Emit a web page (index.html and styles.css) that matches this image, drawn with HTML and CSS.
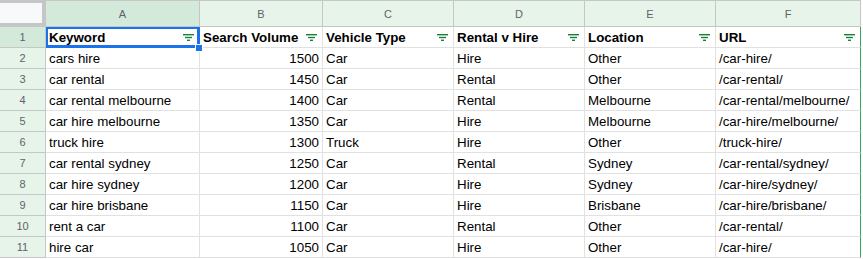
FILE: index.html
```html
<!DOCTYPE html>
<html lang="en">
<head>
<meta charset="UTF-8">
<title>Keywords</title>
<link rel="stylesheet" href="styles.css">
</head>
<body>
<div class="sheet">
  <!-- column letters -->
  <div class="corner"></div>
  <div class="col-head active">A</div>
  <div class="col-head">B</div>
  <div class="col-head">C</div>
  <div class="col-head">D</div>
  <div class="col-head">E</div>
  <div class="col-head last">F</div>

  <!-- header row -->
  <div class="row-head active">1</div>
  <div class="cell th selected">Keyword<svg class="filter" width="11" height="7" viewBox="0 0 11 7"><rect x="0" y="0" width="11" height="1.4"/><rect x="2" y="2.8" width="7" height="1.4"/><rect x="4" y="5.6" width="3" height="1.4"/></svg><span class="handle"></span></div>
  <div class="cell th">Search Volume<svg class="filter" width="11" height="7" viewBox="0 0 11 7"><rect x="0" y="0" width="11" height="1.4"/><rect x="2" y="2.8" width="7" height="1.4"/><rect x="4" y="5.6" width="3" height="1.4"/></svg></div>
  <div class="cell th">Vehicle Type<svg class="filter" width="11" height="7" viewBox="0 0 11 7"><rect x="0" y="0" width="11" height="1.4"/><rect x="2" y="2.8" width="7" height="1.4"/><rect x="4" y="5.6" width="3" height="1.4"/></svg></div>
  <div class="cell th">Rental v Hire<svg class="filter" width="11" height="7" viewBox="0 0 11 7"><rect x="0" y="0" width="11" height="1.4"/><rect x="2" y="2.8" width="7" height="1.4"/><rect x="4" y="5.6" width="3" height="1.4"/></svg></div>
  <div class="cell th">Location<svg class="filter" width="11" height="7" viewBox="0 0 11 7"><rect x="0" y="0" width="11" height="1.4"/><rect x="2" y="2.8" width="7" height="1.4"/><rect x="4" y="5.6" width="3" height="1.4"/></svg></div>
  <div class="cell th edge">URL<svg class="filter" width="11" height="7" viewBox="0 0 11 7"><rect x="0" y="0" width="11" height="1.4"/><rect x="2" y="2.8" width="7" height="1.4"/><rect x="4" y="5.6" width="3" height="1.4"/></svg></div>

  <div class="row-head">2</div>
  <div class="cell">cars hire</div><div class="cell num">1500</div><div class="cell">Car</div><div class="cell">Hire</div><div class="cell">Other</div><div class="cell edge">/car-hire/</div>

  <div class="row-head">3</div>
  <div class="cell">car rental</div><div class="cell num">1450</div><div class="cell">Car</div><div class="cell">Rental</div><div class="cell">Other</div><div class="cell edge">/car-rental/</div>

  <div class="row-head">4</div>
  <div class="cell">car rental melbourne</div><div class="cell num">1400</div><div class="cell">Car</div><div class="cell">Rental</div><div class="cell">Melbourne</div><div class="cell edge">/car-rental/melbourne/</div>

  <div class="row-head">5</div>
  <div class="cell">car hire melbourne</div><div class="cell num">1350</div><div class="cell">Car</div><div class="cell">Hire</div><div class="cell">Melbourne</div><div class="cell edge">/car-hire/melbourne/</div>

  <div class="row-head">6</div>
  <div class="cell">truck hire</div><div class="cell num">1300</div><div class="cell">Truck</div><div class="cell">Hire</div><div class="cell">Other</div><div class="cell edge">/truck-hire/</div>

  <div class="row-head">7</div>
  <div class="cell">car rental sydney</div><div class="cell num">1250</div><div class="cell">Car</div><div class="cell">Rental</div><div class="cell">Sydney</div><div class="cell edge">/car-rental/sydney/</div>

  <div class="row-head">8</div>
  <div class="cell">car hire sydney</div><div class="cell num">1200</div><div class="cell">Car</div><div class="cell">Hire</div><div class="cell">Sydney</div><div class="cell edge">/car-hire/sydney/</div>

  <div class="row-head">9</div>
  <div class="cell">car hire brisbane</div><div class="cell num">1150</div><div class="cell">Car</div><div class="cell">Hire</div><div class="cell">Brisbane</div><div class="cell edge">/car-hire/brisbane/</div>

  <div class="row-head">10</div>
  <div class="cell">rent a car</div><div class="cell num">1100</div><div class="cell">Car</div><div class="cell">Rental</div><div class="cell">Other</div><div class="cell edge">/car-rental/</div>

  <div class="row-head">11</div>
  <div class="cell">hire car</div><div class="cell num">1050</div><div class="cell">Car</div><div class="cell">Hire</div><div class="cell">Other</div><div class="cell edge">/car-hire/</div>
</div>
</body>
</html>
```

FILE: styles.css
```css
body {
  margin: 0;
  background: #fff;
  font-family: "Liberation Sans", Arial, sans-serif;
  overflow: hidden;
}

.sheet {
  display: grid;
  grid-template-columns: 46px 154px 123px 131px 131px 131px 145px;
  grid-template-rows: 27px repeat(11, 21px);
}

.sheet > div {
  box-sizing: border-box;
}

/* top-left box */
.corner {
  background: #f8f9fa;
  border-top: 3px solid #c4c7c5;
  border-right: 4px solid #c4c7c5;
  border-bottom: 4px solid #c4c7c5;
}

.col-head {
  background: #e7f4ea;
  color: #5f6368;
  font-size: 11px;
  display: flex;
  align-items: center;
  justify-content: center;
  border-top: 1px solid #c4c7c5;
  border-right: 1px solid #c4c7c5;
  border-bottom: 1px solid #c4c7c5;
  padding-top: 1px;
}

.row-head {
  background: #e7f4ea;
  color: #5f6368;
  font-size: 11px;
  display: flex;
  align-items: center;
  justify-content: center;
  border-right: 1px solid #c4c7c5;
  border-bottom: 1px solid #c4c7c5;
}

.col-head.active, .row-head.active {
  background: #d3eadb;
}

.cell {
  position: relative;
  font-size: 13.33px;
  color: #000;
  line-height: 20px;
  padding: 1px 3px 0;
  white-space: nowrap;
  overflow: hidden;
  border-right: 1px solid #e1e1e1;
  border-bottom: 1px solid #e1e1e1;
}

.cell.num {
  text-align: right;
}

.cell.edge {
  border-right-color: #34a853;
}

.th {
  font-weight: bold;
  display: flex;
  align-items: center;
  justify-content: space-between;
  padding-right: 5px;
  overflow: visible;
}

.filter {
  fill: #188038;
  flex-shrink: 0;
}

/* selected cell outline + drag handle */
.selected {
  box-shadow: inset 0 0 0 2px #1a73e8;
  border-bottom-color: #1a73e8;
  border-right-color: #1a73e8;
}

.handle {
  position: absolute;
  right: -4px;
  bottom: -5px;
  width: 6px;
  height: 6px;
  background: #1a73e8;
  border: 1px solid #fff;
  z-index: 2;
}
```
